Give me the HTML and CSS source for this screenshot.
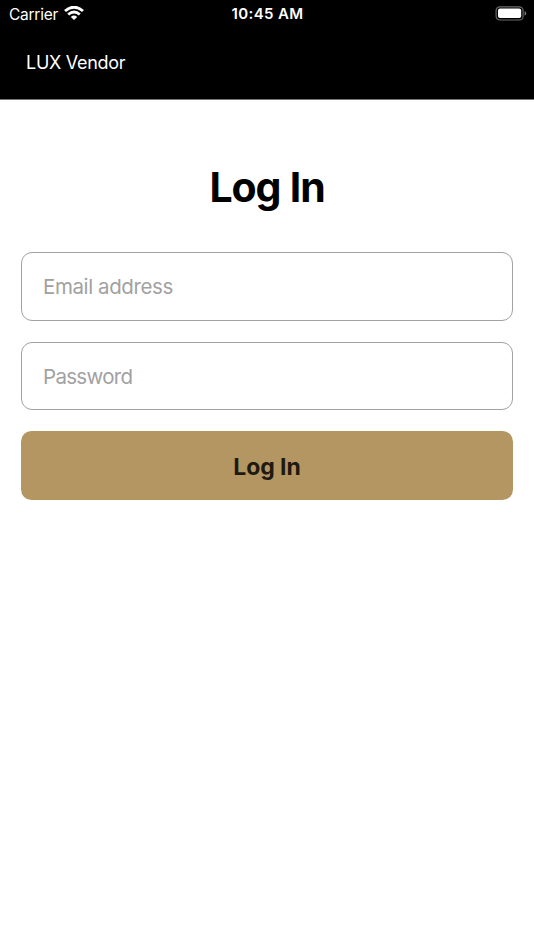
FILE: index.html
```html
<!DOCTYPE html>
<html lang="en">
<head>
<meta charset="utf-8">
<title>LUX Vendor</title>
<link rel="stylesheet" href="styles.css">
</head>
<body>
<header class="top">
  <div class="status">
    <div class="carrier"><span class="carrier-name">Carrier</span>
      <svg class="wifi" width="20" height="14" viewBox="0 0 20 14" fill="none" stroke="#fff" stroke-width="2.9"><path d="M1 5Q10-2.6 19 5M4.2 8.5Q10 3.6 15.8 8.5"/><path d="M10 14L6.8 10.9Q10 8.2 13.2 10.9Z" fill="#fff" stroke="none"/></svg>
    </div>
    <span class="time">10:45 AM</span>
    <svg class="battery" width="32" height="15" viewBox="0 0 32 15"><rect x="1.1" y=".8" width="27" height="13.2" rx="3.8" fill="none" stroke="#6c6c6c" stroke-width="1.2"/><rect x="3" y="2.6" width="23.2" height="9.5" rx="2" fill="#fff"/><path d="M29.6 5.2Q31.2 5.7 31.2 7.4T29.6 9.6Z" fill="#808080"/></svg>
  </div>
  <div class="brand">LUX Vendor</div>
</header>
<main class="login">
  <h1 class="title">Log In</h1>
  <form class="form">
    <input class="field" type="email" placeholder="Email address">
    <input class="field field-password" type="password" placeholder="Password">
    <button class="submit" type="button">Log In</button>
  </form>
</main>
</body>
</html>
```
FILE: styles.css
```css
* { box-sizing: border-box; }
body { margin: 0; background: #fff; color: #000; font-family: Inter, "Liberation Sans", sans-serif; }
.top { height: 100px; background: #000; color: #fff; border-bottom: 1px solid #777; }
.status { height: 28px; padding: 0 7px 0 9px; display: grid; grid-template-columns: 1fr auto 1fr; align-items: center; }
.carrier { display: flex; align-items: center; gap: 6px; font-size: 15.5px; }
.carrier-name { letter-spacing: -.25px; }
.wifi { position: relative; top: -1px; }
.time { font-size: 15px; font-weight: 600; letter-spacing: .35px; transform: translate(-.5px, -1px); }
.battery { justify-self: end; position: relative; top: -.5px; }
.brand { padding: 24px 26px 0; font-size: 18px; line-height: 22px; letter-spacing: -.28px; }
.login { padding: 62px 21px 0; }
.title { margin: 0; font-size: 41px; line-height: 50px; font-weight: 700; text-align: center; letter-spacing: -1.1px; word-spacing: .8px; }
.form { margin-top: 40px; display: flex; flex-direction: column; gap: 21px; }
.field { width: 100%; height: 69px; padding: 0 21px; border: 1px solid #a2a2a2; border-radius: 11px; font: 400 20.5px Inter, sans-serif; letter-spacing: -.4px; background: #fff; outline: none; }
.field-password { height: 68px; letter-spacing: -.7px; }
.field::placeholder { color: #a1a1a1; }
.submit { height: 69px; padding: 2px 0 0; border: 0; border-radius: 10.5px; background: #b39661; color: #1e1a12; font: 700 23px Inter, sans-serif; letter-spacing: -.1px; }
```
